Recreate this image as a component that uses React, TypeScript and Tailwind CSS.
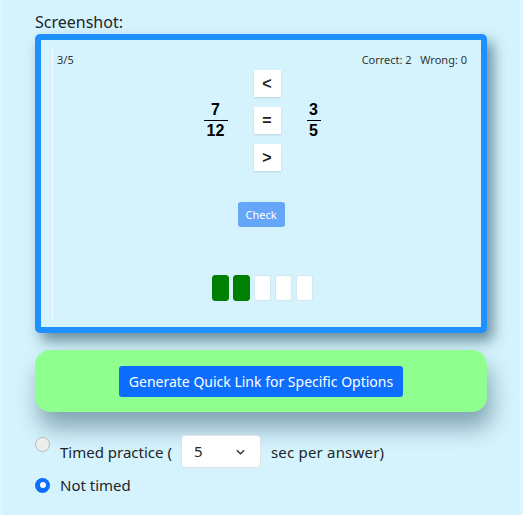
import React from "react";

export default function App() {
  const font = { fontFamily: '"Noto Sans", "Open Sans", sans-serif' };
  return (
    <div className="min-h-[515px] w-[523px] bg-[#ddf6fd]" style={font}>
      <div className="ml-[3px] mr-[3px] min-h-[515px] bg-[#d4f3fd] pl-[32px] pr-[33px] pt-[11px] text-[#212529]">
        <div className="text-[16px] leading-[22px]">Screenshot:</div>
        <div className="mt-[1px] h-[299px] w-[452px] rounded-[5px] border-[6px] border-[#1e90ff] bg-[#d4f3fd] shadow-[6px_8px_14px_rgba(0,40,60,0.5)]">
          <div className="ml-[11px] mt-[10px] h-[268px] border-l border-[#f4fcff] pl-[4px] pr-[14px] relative">
            <div className="flex justify-between text-[11px] leading-[14px] text-[#333] pt-[3px]">
              <span>3/5</span>
              <span>Correct: 2&nbsp;&nbsp; Wrong: 0</span>
            </div>
            <div className="flex items-center justify-center mt-[3px] ml-[0px]" style={{ fontFamily: '"Liberation Sans", Arial, sans-serif' }}>
              <div className="flex flex-col items-center w-[24px] font-bold text-[16px] leading-[18px] text-black">
                <span>7</span>
                <span className="w-[24px] h-[1.5px] bg-black my-[1px]"></span>
                <span>12</span>
              </div>
              <div className="flex flex-col gap-[10px] mx-[26px]">
                {["<", "=", ">"].map((s) => (
                  <div key={s} className="w-[27px] h-[27px] bg-white flex items-center justify-center font-bold text-[16px] shadow-[0_1px_2px_rgba(0,0,0,0.12)]">
                    {s}
                  </div>
                ))}
              </div>
              <div className="flex flex-col items-center w-[14px] font-bold text-[16px] leading-[18px] text-black">
                <span>3</span>
                <span className="w-[14px] h-[1.5px] bg-black my-[1px]"></span>
                <span>5</span>
              </div>
            </div>
            <div className="flex justify-center mt-[31px] ml-[-2px]">
              <button className="w-[47px] h-[25px] rounded-[3px] bg-[#65a6f9] text-white text-[11px] leading-[25px]">Check</button>
            </div>
            <div className="flex justify-center gap-[4px] mt-[48px] ml-[0px]">
              {[1, 1, 0, 0, 0].map((g, i) => (
                <div key={i} className={g ? "w-[17px] h-[26px] rounded-[3px] bg-[#008000] border border-[#0a7a0a]" : "w-[17px] h-[26px] rounded-[3px] bg-white border border-[#cfe8ef]"}></div>
              ))}
            </div>
          </div>
        </div>
        <div className="mt-[17px] h-[62px] w-[452px] rounded-[15px] bg-[#8fff8f] shadow-[4px_16px_22px_rgba(0,40,60,0.38)] flex items-center justify-center">
          <button className="h-[31px] px-[10px] rounded-[3px] bg-[#0d6efd] text-white text-[14px] leading-[31px]">
            Generate Quick Link for Specific Options
          </button>
        </div>
        <div className="mt-[23px] flex items-start">
          <div className="mt-[2px] w-[15px] h-[15px] rounded-full border border-[#b8b8b8] bg-[#eeeeee]"></div>
          <div className="ml-[10px] flex items-center text-[15px]">
            <span className="mt-[2px]">Timed practice (</span>
            <div className="ml-[9px] w-[80px] h-[33px] rounded-[4px] bg-white border border-[#dee2e6] flex items-center justify-between pl-[12px] pr-[14px]">
              <span className="text-[15px]">5</span>
              <svg width="11" height="8" viewBox="0 0 12 8" fill="none" stroke="#333" strokeWidth="1.5">
                <path d="M2 2l4 4 4-4" />
              </svg>
            </div>
            <span className="ml-[10px] mt-[2px] tracking-[0.2px]">sec per answer)</span>
          </div>
        </div>
        <div className="mt-[6px] flex items-center">
          <div className="w-[15px] h-[15px] rounded-full bg-[#0d6efd] flex items-center justify-center">
            <div className="w-[6px] h-[6px] rounded-full bg-white"></div>
          </div>
          <span className="ml-[10px] text-[15px]">Not timed</span>
        </div>
      </div>
    </div>
  );
}
